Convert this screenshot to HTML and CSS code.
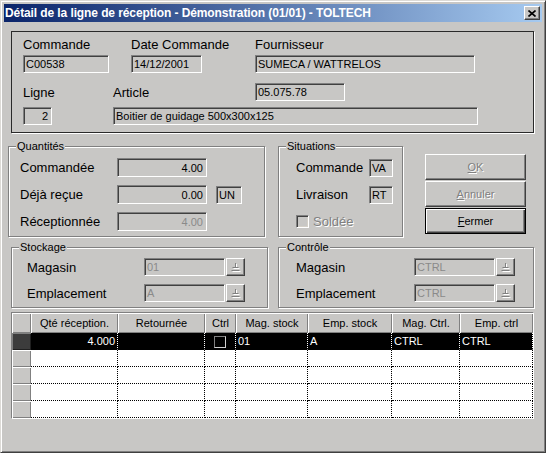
FILE: index.html
```html
<!DOCTYPE html>
<html lang="fr">
<head>
    <meta charset="UTF-8">
    <title>Détail de la ligne de réception</title>
    <link rel="stylesheet" href="styles.css">
</head>
<body>
    <div class="window">
        <div class="titlebar">
            <span class="title">Détail de la ligne de réception - Démonstration (01/01) - TOLTECH</span>
            <span class="close-btn">
                <svg width="8" height="7" viewBox="0 0 8 7"><path d="M0.5 0.5 L7.5 6.5 M7.5 0.5 L0.5 6.5" stroke="#000" stroke-width="1.6" fill="none"/></svg>
            </span>
        </div>

        <div class="order-panel">
            <div class="order-row labels">
                <span class="lbl col-commande">Commande</span>
                <span class="lbl col-date">Date Commande</span>
                <span class="lbl">Fournisseur</span>
            </div>
            <div class="order-row">
                <div class="field f-commande">C00538</div>
                <div class="field f-date">14/12/2001</div>
                <div class="field f-fournisseur">SUMECA / WATTRELOS</div>
            </div>
            <div class="order-row row-article">
                <span class="lbl col-ligne">Ligne</span>
                <span class="lbl col-article">Article</span>
                <div class="field f-article">05.075.78</div>
            </div>
            <div class="order-row">
                <div class="field num f-ligne">2</div>
                <div class="field f-designation">Boitier de guidage 500x300x125</div>
            </div>
        </div>

        <div class="middle-row">
            <fieldset class="group quantites">
                <legend>Quantités</legend>
                <div class="group-body">
                    <div class="form-row">
                        <span class="lbl">Commandée</span>
                        <div class="field num qty">4.00</div>
                    </div>
                    <div class="form-row">
                        <span class="lbl">Déjà reçue</span>
                        <div class="field num qty">0.00</div>
                        <div class="field unit">UN</div>
                    </div>
                    <div class="form-row">
                        <span class="lbl">Réceptionnée</span>
                        <div class="field num qty disabled">4.00</div>
                    </div>
                </div>
            </fieldset>

            <fieldset class="group situations">
                <legend>Situations</legend>
                <div class="group-body">
                    <div class="form-row">
                        <span class="lbl">Commande</span>
                        <div class="field code">VA</div>
                    </div>
                    <div class="form-row">
                        <span class="lbl">Livraison</span>
                        <div class="field code">RT</div>
                    </div>
                    <div class="form-row">
                        <span class="checkbox"></span>
                        <span class="lbl grayed">Soldée</span>
                    </div>
                </div>
            </fieldset>

            <div class="button-col">
                <div class="btn grayed"><u>O</u>K</div>
                <div class="btn grayed"><u>A</u>nnuler</div>
                <div class="btn default"><u>F</u>ermer</div>
            </div>
        </div>

        <div class="bottom-row">
            <fieldset class="group stockage">
                <legend>Stockage</legend>
                <div class="group-body">
                    <div class="form-row">
                        <span class="lbl">Magasin</span>
                        <div class="field disabled loc">01</div>
                        <span class="lookup"><svg width="11" height="10" viewBox="0 0 11 10"><path d="M5.5 1 V5 M2.5 5.5 H8.5 M1.5 8.5 H9.5" stroke="#fff" fill="none" transform="translate(1 1)"/><path d="M5.5 1 V5 M2.5 5.5 H8.5 M1.5 8.5 H9.5" stroke="#808080" fill="none"/></svg></span>
                    </div>
                    <div class="form-row">
                        <span class="lbl">Emplacement</span>
                        <div class="field disabled loc">A</div>
                        <span class="lookup"><svg width="11" height="10" viewBox="0 0 11 10"><path d="M5.5 1 V5 M2.5 5.5 H8.5 M1.5 8.5 H9.5" stroke="#fff" fill="none" transform="translate(1 1)"/><path d="M5.5 1 V5 M2.5 5.5 H8.5 M1.5 8.5 H9.5" stroke="#808080" fill="none"/></svg></span>
                    </div>
                </div>
            </fieldset>

            <fieldset class="group controle">
                <legend>Contrôle</legend>
                <div class="group-body">
                    <div class="form-row">
                        <span class="lbl">Magasin</span>
                        <div class="field disabled loc">CTRL</div>
                        <span class="lookup"><svg width="11" height="10" viewBox="0 0 11 10"><path d="M5.5 1 V5 M2.5 5.5 H8.5 M1.5 8.5 H9.5" stroke="#fff" fill="none" transform="translate(1 1)"/><path d="M5.5 1 V5 M2.5 5.5 H8.5 M1.5 8.5 H9.5" stroke="#808080" fill="none"/></svg></span>
                    </div>
                    <div class="form-row">
                        <span class="lbl">Emplacement</span>
                        <div class="field disabled loc">CTRL</div>
                        <span class="lookup"><svg width="11" height="10" viewBox="0 0 11 10"><path d="M5.5 1 V5 M2.5 5.5 H8.5 M1.5 8.5 H9.5" stroke="#fff" fill="none" transform="translate(1 1)"/><path d="M5.5 1 V5 M2.5 5.5 H8.5 M1.5 8.5 H9.5" stroke="#808080" fill="none"/></svg></span>
                    </div>
                </div>
            </fieldset>
        </div>

        <div class="grid">
            <table class="lines">
                <colgroup>
                    <col style="width:19px"><col style="width:87px"><col style="width:87px"><col style="width:31px">
                    <col style="width:72px"><col style="width:84px"><col style="width:68px"><col style="width:73px">
                </colgroup>
                <thead>
                    <tr>
                        <th></th>
                        <th>Qté réception.</th>
                        <th>Retournée</th>
                        <th>Ctrl</th>
                        <th>Mag. stock</th>
                        <th>Emp. stock</th>
                        <th>Mag. Ctrl.</th>
                        <th>Emp. ctrl</th>
                    </tr>
                </thead>
                <tbody>
                    <tr class="selected">
                        <td class="ind"></td>
                        <td class="num">4.000</td>
                        <td></td>
                        <td class="chk"><span class="grid-check"></span></td>
                        <td>01</td>
                        <td>A</td>
                        <td>CTRL</td>
                        <td>CTRL</td>
                    </tr>
                    <tr><td class="ind"></td><td></td><td></td><td></td><td></td><td></td><td></td><td></td></tr>
                    <tr><td class="ind"></td><td></td><td></td><td></td><td></td><td></td><td></td><td></td></tr>
                    <tr><td class="ind"></td><td></td><td></td><td></td><td></td><td></td><td></td><td></td></tr>
                    <tr><td class="ind"></td><td></td><td></td><td></td><td></td><td></td><td></td><td></td></tr>
                </tbody>
            </table>
        </div>
    </div>
</body>
</html>
```

FILE: styles.css
```css
* {
    box-sizing: border-box;
}
body {
    margin: 0;
    background: #c8c7c5;
    font-family: "Liberation Sans", Arial, sans-serif;
    font-size: 11px;
    color: #000;
}
.window {
    width: 546px;
    height: 453px;
    border: 1px solid;
    border-color: #dcdad6 #404040 #404040 #dcdad6;
    box-shadow: inset 1px 1px 0 #fff, inset -1px -1px 0 #808080;
    padding: 3px;
    background: #c8c7c5;
}
.titlebar {
    height: 18px;
    display: flex;
    align-items: center;
    justify-content: space-between;
    padding: 0 2px 0 1px;
    background: linear-gradient(to right, #0a246a, #a6caf0);
}
.title {
    color: #fff;
    font-weight: bold;
    font-size: 12px;
    letter-spacing: -0.1px;
    white-space: nowrap;
}
.close-btn {
    width: 16px;
    height: 14px;
    display: flex;
    align-items: center;
    justify-content: center;
    background: #c8c7c5;
    border: 1px solid;
    border-color: #fff #404040 #404040 #fff;
    box-shadow: inset -1px -1px 0 #808080;
}

/* common widgets */
.lbl {
    font-size: 13px;
    line-height: 15px;
    white-space: nowrap;
}
.field {
    height: 18px;
    border: 1px solid;
    border-color: #808080 #fff #fff #808080;
    box-shadow: inset 1px 1px 0 #404040;
    padding: 0 2px 0 2px;
    display: flex;
    align-items: center;
    white-space: nowrap;
    overflow: hidden;
    font-size: 11px;
}
.field.num {
    justify-content: flex-end;
    padding-right: 3px;
}
.field.disabled {
    color: #8a8a8a;
}
.grayed {
    color: #808080;
    text-shadow: 1px 1px 0 #fff;
}

/* top panel */
.order-panel {
    margin: 9px 0 0 7px;
    width: 523px;
    border: 1px solid #2a2a2a;
    box-shadow: 1px 1px 0 #fff;
    padding: 5px 0 7px 11px;
}
.order-row {
    display: flex;
    align-items: center;
    margin-top: 3px;
}
.order-row.labels {
    margin-top: 0;
    height: 15px;
}
.order-row.row-article {
    margin-top: 10px;
}
.order-row.row-article + .order-row {
    margin-top: 6px;
}
.col-commande { width: 108px; }
.col-date { width: 124px; }
.col-ligne { width: 90px; }
.col-article { width: 142px; }
.f-commande { width: 86px; margin-right: 22px; }
.f-date { width: 71px; margin-right: 53px; }
.f-fournisseur { width: 220px; }
.f-article { width: 90px; }
.f-ligne { width: 29px; margin-right: 61px; }
.f-designation { width: 365px; }

/* group boxes */
.group {
    margin: 0;
    padding: 0;
    min-width: 0;
    border: 1px solid #808080;
    box-shadow: inset 1px 1px 0 #fff, 1px 1px 0 #fff;
}
.group legend {
    font-size: 11px;
    line-height: 13px;
    padding: 0 1px;
    margin-left: 7px;
    background: #c8c7c5;
}
.group-body {
    display: flex;
    flex-direction: column;
    gap: 8px;
    padding: 5px 0 5px 11px;
}
.form-row {
    display: flex;
    align-items: center;
    height: 19px;
}

.middle-row {
    display: flex;
    align-items: flex-start;
    margin-top: 7px;
}
.quantites {
    margin-left: 4px;
    width: 257px;
}
.quantites .lbl { width: 97px; }
.field.qty { width: 90px; height: 19px; }
.field.unit { width: 26px; margin-left: 9px; }

.situations {
    margin-left: 13px;
    width: 125px;
}
.situations .group-body { padding-left: 17px; }
.situations .lbl { width: 73px; }
.field.code { width: 24px; }
.checkbox {
    width: 13px;
    height: 13px;
    border: 1px solid;
    border-color: #808080 #fff #fff #808080;
    box-shadow: inset 1px 1px 0 #404040, inset -1px -1px 0 #d4d0c8;
    margin-right: 4px;
}
.situations .lbl.grayed { width: auto; }

.button-col {
    display: flex;
    flex-direction: column;
    gap: 1px;
    margin: 14px 0 0 22px;
    width: 101px;
}
.btn {
    height: 26px;
    display: flex;
    align-items: center;
    justify-content: center;
    font-size: 11px;
    border: 1px solid;
    border-color: #fff #404040 #404040 #fff;
    box-shadow: inset -1px -1px 0 #808080;
}
.btn.default {
    border-color: #000;
    box-shadow: inset 1px 1px 0 #fff, inset -1px -1px 0 #404040, inset -2px -2px 0 #808080;
}

.bottom-row {
    display: flex;
    margin-top: 4px;
}
.stockage {
    margin-left: 7px;
    width: 257px;
}
.controle {
    margin-left: 10px;
    width: 256px;
}
.bottom-row .group-body {
    padding: 4px 0 5px 15px;
}
.controle .group-body { padding-left: 17px; }
.bottom-row .form-row { height: 18px; }
.bottom-row .lbl { width: 117px; }
.controle .lbl { width: 118px; }
.field.loc { width: 81px; }
.lookup {
    width: 19px;
    height: 18px;
    margin-left: 1px;
    display: flex;
    align-items: center;
    justify-content: center;
    border: 1px solid;
    border-color: #fff #404040 #404040 #fff;
    box-shadow: inset -1px -1px 0 #808080;
}

/* lines grid */
.grid {
    margin: 4px 0 0 7px;
    width: 523px;
    height: 107px;
    border: 1px solid;
    border-color: #808080 #fff #fff #808080;
    overflow: hidden;
}
.lines {
    width: 521px;
    table-layout: fixed;
    border-collapse: separate;
    border-spacing: 0;
}
.lines th {
    height: 20px;
    padding: 0;
    font-weight: normal;
    font-size: 11px;
    text-align: center;
    white-space: nowrap;
    background: #c8c7c5;
    box-shadow: inset 1px 1px 0 #fff, inset -1px -1px 0 #808080;
}
.lines td {
    height: 17px;
    padding: 0 2px;
    font-size: 11px;
    white-space: nowrap;
    overflow: hidden;
    background: #fff;
    border-right: 1px dotted #000;
    border-bottom: 1px dotted #000;
}
.lines td.ind {
    background: #c8c7c5;
    border: none;
    box-shadow: inset 1px 1px 0 #fff, inset -1px -1px 0 #808080;
}
.lines td.num {
    text-align: right;
}
.lines tr.selected td {
    background: #000;
    color: #fff;
    border-right-color: #fff;
}
.lines tr.selected td.ind {
    background: #3c3c3c;
    box-shadow: inset 1px 1px 0 #808080, inset -1px -1px 0 #202020;
}
.lines td.chk {
    text-align: center;
}
.grid-check {
    display: inline-block;
    width: 12px;
    height: 12px;
    vertical-align: middle;
    border: 1px solid;
    border-color: #808080 #d0d0d0 #d0d0d0 #808080;
}
```
